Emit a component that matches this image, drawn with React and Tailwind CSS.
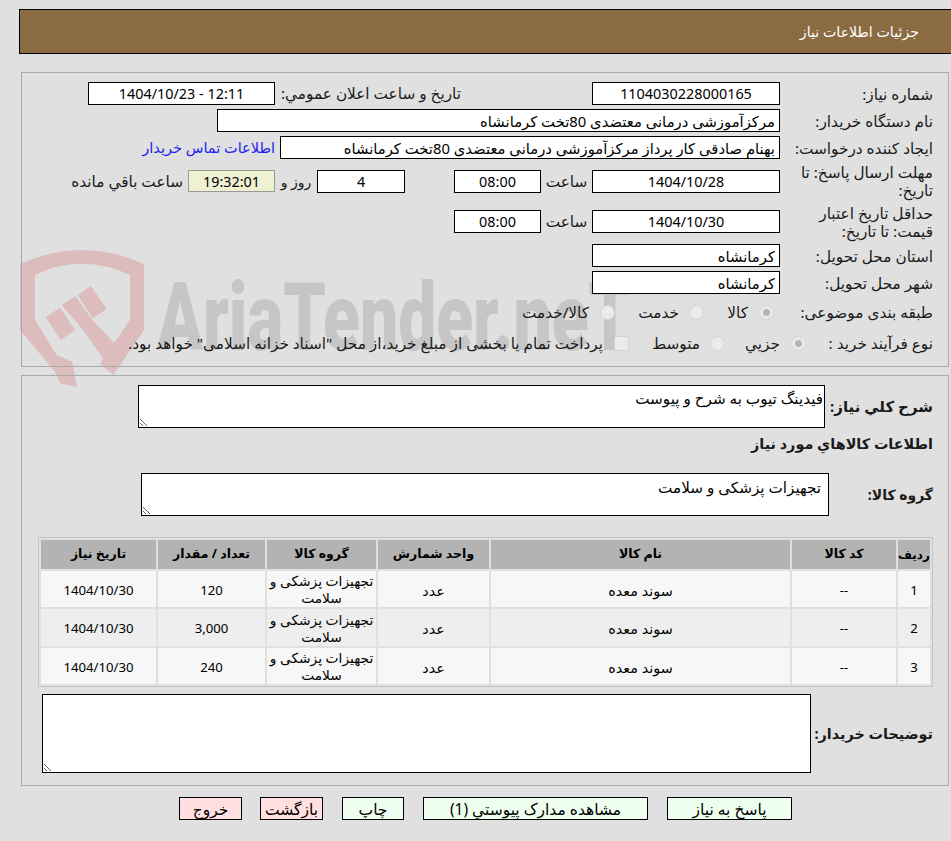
import React from "react";

const boxClass = "h-[23px] shrink-0 border border-black bg-white text-black outline-none";

function Label({ children, className = "w-[154px]" }) {
  return <div className={`shrink-0 pr-[1px] leading-[18px] ${className}`}>{children}</div>;
}

function Field({ value, className = "w-[188px]", center }) {
  return (
    <input
      readOnly
      dir="rtl"
      value={value}
      className={`${boxClass} ${center ? "px-1 text-center text-[14.4px]" : "px-[4px] text-right text-[14.8px]"} ${className}`}
    />
  );
}

function Radio({ checked }) {
  return (
    <span className="flex h-[15px] w-[15px] shrink-0 items-center justify-center rounded-full border border-[#d2d2d2] bg-[#ebebeb]">
      {checked && <span className="h-[7px] w-[7px] rounded-full bg-[#b5b5b5]" />}
    </span>
  );
}

function Area({ value, className }) {
  return (
    <textarea
      readOnly
      dir="rtl"
      defaultValue={value}
      className={`block border border-black bg-white text-[15.2px] leading-[18px] text-black outline-none ${className}`}
    />
  );
}

function Watermark() {
  return (
    <div className="pointer-events-none absolute left-0 top-0 h-[400px] w-[700px] overflow-hidden">
      <svg className="absolute left-[10px] top-[240px]" width="200" height="150" viewBox="0 0 600 450">
        <path
          fill="#dcbcbc"
          fillRule="evenodd"
          d="M30 72 Q215 -12 402 72 L402 270 L310 405 L270 370 L360 240 L360 105 Q215 38 75 105 L75 240 L140 345 L187 365 L201 441 L150 430 L135 395 L30 270 Z"
        />
        <path fill="#dcbcbc" d="M107 232 L150 203 L195 270 L152 300 Z" />
        <path fill="#dcbcbc" d="M155 195 L197 168 L243 235 L345 345 L310 400 L215 265 Z" />
        <path fill="#dcbcbc" d="M203 165 L243 138 L290 207 L248 235 Z" />
      </svg>
      <div className="absolute left-[157px] top-[263px] origin-left scale-x-[0.72] whitespace-nowrap font-['Roboto',sans-serif] text-[94px] font-black leading-[110px] text-[#c6c6c6]" dir="ltr">
        AriaTender.neT
      </div>
    </div>
  );
}

const rows = [
  { id: 1, qty: "120", h: "h-[36px]" },
  { id: 2, qty: "3,000", h: "h-[37px]" },
  { id: 3, qty: "240", h: "h-[36px]" },
];

const headers = [
  ["ردیف", "w-[32px] text-[12px]"],
  ["کد کالا", "w-[104px] text-[12.5px]"],
  ["نام کالا", "w-[299px] text-[12.5px]"],
  ["واحد شمارش", "w-[111px] text-[12.5px]"],
  ["گروه کالا", "w-[109px] text-[12.5px]"],
  ["تعداد / مقدار", "w-[107px] text-[12.5px]"],
  ["تاریخ نیاز", "w-[115px] text-[12.5px]"],
];

function ItemsTable() {
  return (
    <table className="mr-[15px] w-[895px] table-fixed border-separate border-spacing-[2px] border border-[#c4c4c4] text-black">
      <thead>
        <tr>
          {headers.map(([title, width]) => (
            <th key={title} className={`h-[29px] whitespace-nowrap bg-[#b3b3b3] p-0 text-center font-bold ${width}`}>{title}</th>
          ))}
        </tr>
      </thead>
      <tbody>
        {rows.map((row) => {
          const bg = row.id === 2 ? "bg-[#eeeeee]" : "bg-[#f7f7f7]";
          const cell = `${bg} ${row.h} p-0 pt-[3px] text-center`;
          return (
            <tr key={row.id}>
              <td className={`${cell} text-[13.2px]`}>{row.id}</td>
              <td className={`${cell} text-[13.2px]`}>--</td>
              <td className={`${cell} text-[14.4px]`}>سوند معده</td>
              <td className={`${cell} text-[14.4px]`}>عدد</td>
              <td className={`${bg} ${row.h} p-0 text-center text-[13.8px] leading-[17px]`}>تجهیزات پزشکی و سلامت</td>
              <td className={`${cell} text-[13.2px]`}>{row.qty}</td>
              <td className={`${cell} text-[13.2px]`}>1404/10/30</td>
            </tr>
          );
        })}
      </tbody>
    </table>
  );
}

function ActionButton({ children, className, red }) {
  return (
    <button className={`h-[23px] border border-black text-[15.5px] text-black ${red ? "bg-[#ffdfdf]" : "bg-[#efffef]"} ${className}`}>
      {children}
    </button>
  );
}

export default function App() {
  return (
    <div dir="rtl" className="relative h-[841px] w-[951px] overflow-hidden bg-[#e0e0e0] font-['Noto_Sans','DejaVu_Sans',sans-serif] text-[15.3px] text-[#1a1a1a]">
      <Watermark />

      <div className="relative pt-[9px]">
        <div className="ml-[19px] flex h-[45px] items-center border-y border-l border-black bg-[#8b6c42] pr-[32px] text-[14.2px] text-white">
          جزئیات اطلاعات نیاز
        </div>

        {/* اطلاعات نیاز */}
        <div className="ml-[21px] mr-[2px] mt-[18px] h-[295px] border border-[#a9a9a9] pr-[14px] pt-[7px]">
          <div className="flex h-[27px] items-center">
            <Label>شماره نیاز:</Label>
            <Field value="1104030228000165" center />
            <div className="mr-[131px] w-[186px] shrink-0 whitespace-nowrap">تاریخ و ساعت اعلان عمومي:</div>
            <Field value="12:11 - 1404/10/23" center className="w-[187px]" />
          </div>
          <div className="flex h-[27px] items-center">
            <Label>نام دستگاه خریدار:</Label>
            <Field value="مرکزآموزشی درمانی معتضدی 80تخت کرمانشاه" className="w-[563px]" />
          </div>
          <div className="flex h-[27px] items-center">
            <Label>ایجاد کننده درخواست:</Label>
            <Field value="بهنام صادقی کار پرداز مرکزآموزشی درمانی معتضدی 80تخت کرمانشاه" className="w-[500px]" />
            <a className="mr-[5px] whitespace-nowrap text-[14.5px] text-[#2222ee]">اطلاعات تماس خریدار</a>
          </div>
          <div className="flex h-[40px] items-center">
            <Label>مهلت ارسال پاسخ: تا تاریخ:</Label>
            <Field value="1404/10/28" center />
            <div className="w-[51px] shrink-0 text-center">ساعت</div>
            <Field value="08:00" center className="w-[87px]" />
            <div className="w-[49px] shrink-0" />
            <Field value="4" center className="w-[88px]" />
            <div className="w-[42px] shrink-0 text-center text-[14px]">روز و</div>
            <input readOnly value="19:32:01" className="h-[22px] w-[87px] shrink-0 border border-[#999] bg-[#f0f0d2] text-center text-[14.4px] text-black outline-none" />
            <div className="mr-[5px] whitespace-nowrap">ساعت باقي مانده</div>
          </div>
          <div className="flex h-[41px] items-center">
            <Label>حداقل تاریخ اعتبار قیمت: تا تاریخ:</Label>
            <Field value="1404/10/30" center />
            <div className="w-[51px] shrink-0 text-center">ساعت</div>
            <Field value="08:00" center className="w-[87px]" />
          </div>
          <div className="flex h-[27px] items-center">
            <Label>استان محل تحویل:</Label>
            <Field value="کرمانشاه" />
          </div>
          <div className="flex h-[27px] items-center">
            <Label>شهر محل تحویل:</Label>
            <Field value="کرمانشاه" />
          </div>
          <div className="flex h-[32px] items-center">
            <Label>طبقه بندی موضوعی:</Label>
            <div className="mr-[6px]"><Radio checked /></div>
            <span className="mr-[11px] w-[44px] shrink-0 whitespace-nowrap">کالا</span>
            <Radio />
            <span className="mr-[10px] w-[64px] shrink-0 whitespace-nowrap">خدمت</span>
            <Radio />
            <span className="mr-[11px] whitespace-nowrap">کالا/خدمت</span>
          </div>
          <div className="flex h-[30px] items-center">
            <Label className="w-[128px]">نوع فرآیند خرید :</Label>
            <Radio checked />
            <span className="mr-[11px] w-[55px] shrink-0 whitespace-nowrap">جزیي</span>
            <Radio />
            <span className="mr-[10px] w-[71px] shrink-0 whitespace-nowrap">متوسط</span>
            <span className="h-[15px] w-[15px] shrink-0 rounded-[2px] border border-[#d2d2d2] bg-[#ebebeb]" />
            <span className="mr-[11px] whitespace-nowrap">پرداخت تمام یا بخشی از مبلغ خرید،از محل "اسناد خزانه اسلامی" خواهد بود.</span>
          </div>
        </div>

        {/* شرح و کالاها */}
        <div className="relative ml-[21px] mr-[2px] mt-[8px] h-[411px] border border-[#a9a9a9] pt-[9px]">
          <div className="flex items-center pr-[14px]">
            <div className="w-[109px] shrink-0 whitespace-nowrap pr-[1px] text-[15px] font-bold">شرح كلي نياز:</div>
            <Area value="فیدینگ تیوب به شرح و پیوست" className="h-[43px] w-[687px] px-[1px] pt-[3px]" />
          </div>
          <div className="flex h-[32px] items-center pr-[15px] text-[14.4px] font-bold">اطلاعات کالاهاي مورد نیاز</div>
          <div className="mt-[13px] flex items-center pr-[14px]">
            <div className="w-[105px] shrink-0 whitespace-nowrap pr-[1px] text-[14px] font-bold">گروه کالا:</div>
            <Area value="تجهیزات پزشکی و سلامت" className="h-[43px] w-[688px] px-[7px] pt-[4px]" />
          </div>
          <div className="mt-[21px]"><ItemsTable /></div>
          <div className="mt-[7px] flex items-center pr-[14px]">
            <div className="w-[123px] shrink-0 whitespace-nowrap pr-[1px] text-[14.4px] font-bold">توضیحات خریدار:</div>
            <Area value="" className="h-[79px] w-[769px]" />
          </div>
        </div>

        {/* دکمه ها */}
        <div className="mt-[11px] flex pr-[159px]">
          <ActionButton className="w-[125px]">پاسخ به نیاز</ActionButton>
          <ActionButton className="mr-[19px] w-[225px]">مشاهده مدارک پیوستي (1)</ActionButton>
          <ActionButton className="mr-[19px] w-[62px]">چاپ</ActionButton>
          <ActionButton red className="mr-[19px] w-[63px]">بازگشت</ActionButton>
          <ActionButton red className="mr-[18px] w-[63px]">خروج</ActionButton>
        </div>
      </div>
    </div>
  );
}
